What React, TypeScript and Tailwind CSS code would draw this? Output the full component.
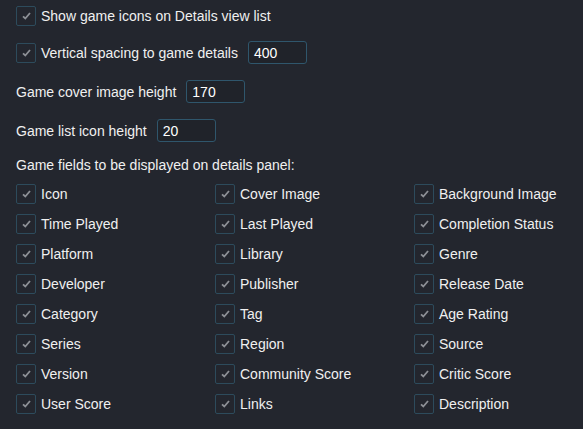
const fields = [
  'Icon', 'Cover Image', 'Background Image',
  'Time Played', 'Last Played', 'Completion Status',
  'Platform', 'Library', 'Genre',
  'Developer', 'Publisher', 'Release Date',
  'Category', 'Tag', 'Age Rating',
  'Series', 'Region', 'Source',
  'Version', 'Community Score', 'Critic Score',
  'User Score', 'Links', 'Description',
];

function Check({ label }: { label: string }) {
  return (
    <label className="flex h-5 items-center">
      <span className="flex h-5 w-5 shrink-0 items-center justify-center rounded-[2px] border border-[#2d4b5c] bg-[#23262e]">
        <svg width="9" height="8" viewBox="0 0 9 8">
          <path d="M1 4.3 L3.3 6.5 L8 1" fill="none" stroke="#8d9096" strokeWidth="1.8" />
        </svg>
      </span>
      <span className="ml-[5px] whitespace-nowrap">{label}</span>
    </label>
  );
}

function NumberBox({ value }: { value: string }) {
  return (
    <div className="flex h-[23px] w-[59px] items-center rounded-[3px] border border-[#2f566c] bg-[#20232a] pl-[5px] text-white">
      {value}
    </div>
  );
}

export default function App() {
  return (
    <div className="h-[429px] w-[583px] overflow-hidden bg-[#23262e] pl-4 font-['Liberation_Sans',Arial,sans-serif] text-[14px] leading-4 text-[#f0f0f0]">
      <div className="flex flex-col">
        <div className="mt-[6px]">
          <Check label="Show game icons on Details view list" />
        </div>

        <div className="mt-[15px] flex h-[23px] items-center">
          <Check label="Vertical spacing to game details" />
          <div className="ml-[10px]">
            <NumberBox value="400" />
          </div>
        </div>

        <div className="mt-4 flex h-[23px] items-center">
          <span>Game cover image height</span>
          <div className="ml-[10px]">
            <NumberBox value="170" />
          </div>
        </div>

        <div className="mt-4 flex h-[23px] items-center">
          <span>Game list icon height</span>
          <div className="ml-[10px]">
            <NumberBox value="20" />
          </div>
        </div>

        <div className="mt-[15px] h-4">Game fields to be displayed on details panel:</div>

        <div className="mt-[11px] grid grid-cols-[199px_199px_1fr] gap-y-[10px]">
          {fields.map((f) => (
            <Check key={f} label={f} />
          ))}
        </div>
      </div>
    </div>
  );
}
